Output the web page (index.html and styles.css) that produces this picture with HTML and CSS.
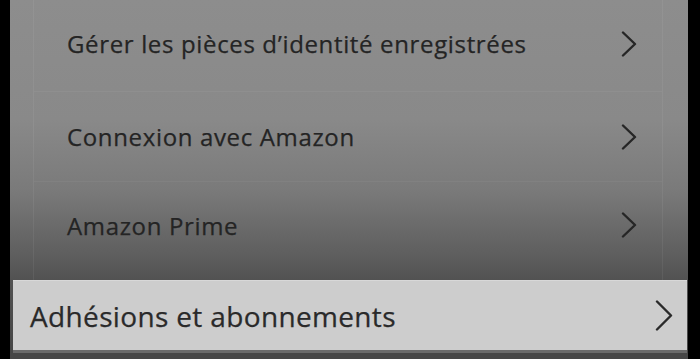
FILE: index.html
```html
<!DOCTYPE html>
<html lang="fr">
<head>
<meta charset="utf-8">
<link rel="stylesheet" href="styles.css">
</head>
<body>
<div class="screen">
  <div class="list">
    <div class="row row-first">
      <span class="label">Gérer les pièces d’identité enregistrées</span>
      <svg class="chev" width="16" height="26" viewBox="0 0 16 26"><path d="M2 1.5 L14 13 L2 24.5" fill="none" stroke="#262626" stroke-width="2.4" stroke-linecap="round" stroke-linejoin="round"/></svg>
    </div>
    <div class="row">
      <span class="label">Connexion avec Amazon</span>
      <svg class="chev" width="16" height="26" viewBox="0 0 16 26"><path d="M2 1.5 L14 13 L2 24.5" fill="none" stroke="#262626" stroke-width="2.4" stroke-linecap="round" stroke-linejoin="round"/></svg>
    </div>
    <div class="row row-last">
      <span class="label">Amazon Prime</span>
      <svg class="chev" width="16" height="26" viewBox="0 0 16 26"><path d="M2 1.5 L14 13 L2 24.5" fill="none" stroke="#262626" stroke-width="2.4" stroke-linecap="round" stroke-linejoin="round"/></svg>
    </div>
  </div>
  <div class="highlight">
    <span class="hl-label">Adhésions et abonnements</span>
    <svg class="hl-chev" width="18" height="31" viewBox="0 0 18 31"><path d="M2 1.5 L16 15.5 L2 29.5" fill="none" stroke="#2a2a2a" stroke-width="2.4" stroke-linecap="round" stroke-linejoin="round"/></svg>
  </div>
  <div class="bottom"></div>
</div>
</body>
</html>
```
FILE: styles.css
```css
html, body {
  margin: 0;
  padding: 0;
  background: #000;
  width: 700px;
  height: 359px;
  overflow: hidden;
  font-family: "Open Sans", "Noto Sans", sans-serif;
}

.screen {
  margin-left: 10px;
  width: 678px;
  height: 359px;
  display: flex;
  flex-direction: column;
  background: linear-gradient(to bottom, #8d8d8d 0px, #898989 120px, #7a7a7a 190px, #5c5c5c 260px, #525252 280px, #454545 359px);
}

.list {
  margin: 0 25px 0 23px;
  border-left: 1px solid rgba(255,255,255,0.06);
  border-right: 1px solid rgba(255,255,255,0.06);
  height: 280px;
  display: flex;
  flex-direction: column;
}

.row {
  height: 90px;
  display: flex;
  align-items: center;
  justify-content: space-between;
  padding: 0 25px 0 33px;
  border-bottom: 1px solid rgba(255,255,255,0.045);
  box-sizing: border-box;
}

.row-first {
  height: 92px;
  padding-bottom: 4px;
}

.row-last {
  flex: 1;
  border-bottom: none;
  padding-bottom: 12px;
}

.label {
  font-size: 24px;
  font-weight: 500;
  letter-spacing: 0.65px;
  color: #242424;
  -webkit-text-stroke: 0.25px #242424;
}

.highlight {
  margin: 0 1px 0 3px;
  height: 73px;
  box-sizing: border-box;
  background: #cdcdcd;
  border-top: 1px solid #d8d8d8;
  border-bottom: 3px solid #6a6a6a;
  display: flex;
  align-items: center;
  justify-content: space-between;
  padding: 0 14px 0 17px;
}

.hl-label {
  font-size: 28px;
  font-weight: 500;
  letter-spacing: 0.35px;
  color: #2a2a2a;
  -webkit-text-stroke: 0.25px #2a2a2a;
}

.bottom {
  flex: 1;
  background: #464646;
}
```
